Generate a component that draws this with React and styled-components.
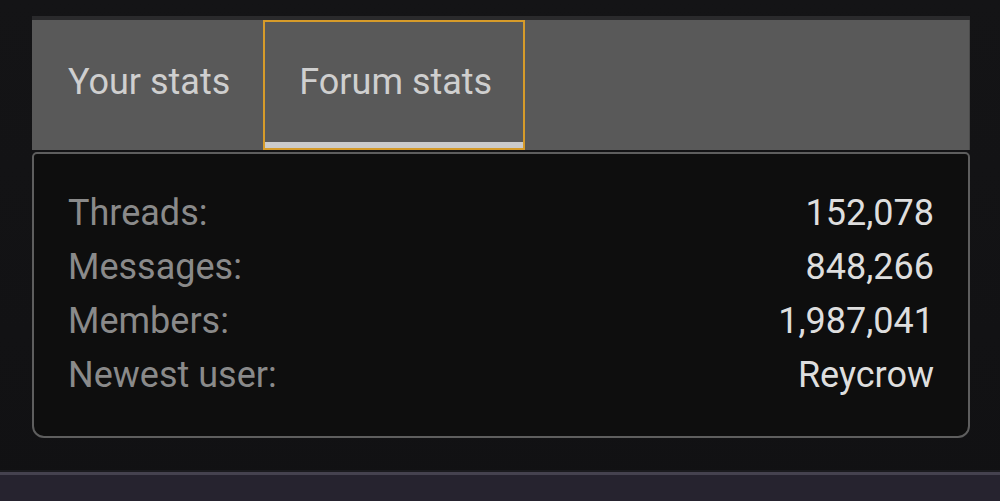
import React from "react";
import styled, { createGlobalStyle } from "styled-components";

const GlobalStyle = createGlobalStyle`
  html, body {
    margin: 0;
    padding: 0;
    background: #131315;
  }
  body {
    font-family: Roboto, "Noto Sans", sans-serif;
  }
`;

const Page = styled.div`
  width: 1000px;
  height: 501px;
  display: flex;
  flex-direction: column;
  overflow: hidden;
  background: linear-gradient(#141416, #111113);
`;

const Main = styled.div`
  flex: 1;
  padding: 16px 30px 0 32px;
`;

const Block = styled.div`
  border-top: 4px solid #2a2a2c;
  display: flex;
  flex-direction: column;
`;

const TabBar = styled.div`
  display: flex;
  height: 130px;
  background: #595959;
  border-right: 1px solid #4a4a4a;
`;

const Tab = styled.button`
  box-sizing: border-box;
  height: 100%;
  padding: 0 31px 6px 34px;
  border: 2px solid ${(p) => (p.active ? "#d69b2a" : "transparent")};
  background: #595959;
  color: #cfcfcf;
  font-family: inherit;
  font-size: 36px;
  display: flex;
  align-items: center;
  position: relative;
  cursor: pointer;

  &::after {
    content: "";
    display: ${(p) => (p.active ? "block" : "none")};
    position: absolute;
    left: 0;
    right: 0;
    bottom: 0;
    height: 6px;
    background: #cbcbcb;
  }
`;

const Body = styled.div`
  margin-top: 2px;
  border: 2px solid #5e5e5e;
  border-radius: 5px 5px 12px 12px;
  background: #0e0e0e;
  padding: 32px 34px 34px 34px;
`;

const Row = styled.div`
  display: flex;
  justify-content: space-between;
  align-items: center;
  height: 54px;
  font-size: 36px;
`;

const Label = styled.span`
  color: #8a8a8a;
`;

const Value = styled.span`
  color: #dedede;
`;

const Footer = styled.div`
  height: 26px;
  background: #26232f;
  border-top: 3px solid #45424f;
  box-shadow: 0 -2px 0 #1a1a1e;
`;

const stats = [
  ["Threads:", "152,078"],
  ["Messages:", "848,266"],
  ["Members:", "1,987,041"],
  ["Newest user:", "Reycrow"],
];

const App = () => {
  return (
    <Page>
      <GlobalStyle />
      <Main>
        <Block>
          <TabBar>
            <Tab>Your stats</Tab>
            <Tab active>Forum stats</Tab>
          </TabBar>
          <Body>
            {stats.map(([label, value]) => (
              <Row key={label}>
                <Label>{label}</Label>
                <Value>{value}</Value>
              </Row>
            ))}
          </Body>
        </Block>
      </Main>
      <Footer />
    </Page>
  );
};

export default App;
